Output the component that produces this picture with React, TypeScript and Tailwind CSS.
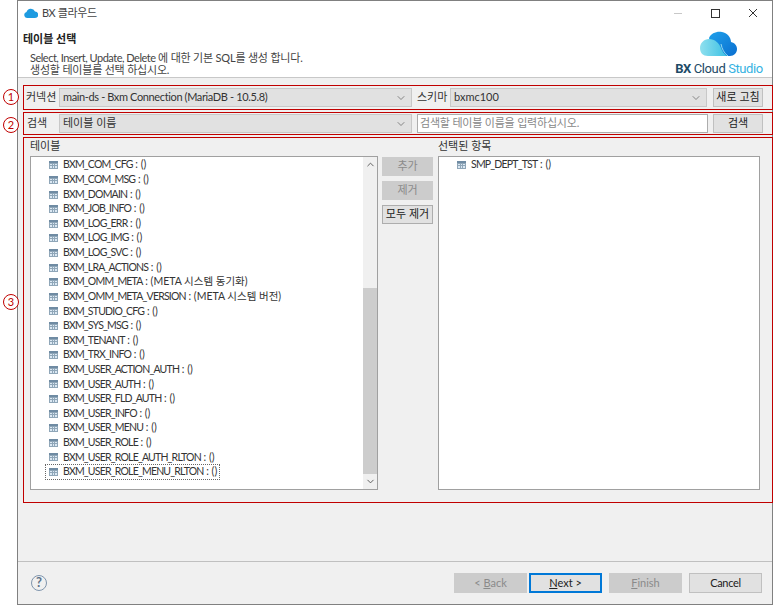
import { ChevronDown, ChevronUp } from 'lucide-react';

const font = "font-['Lato','Noto_Sans_CJK_KR',sans-serif]";

const tables = [
  ['BXM_COM_CFG', '()'],
  ['BXM_COM_MSG', '()'],
  ['BXM_DOMAIN', '()'],
  ['BXM_JOB_INFO', '()'],
  ['BXM_LOG_ERR', '()'],
  ['BXM_LOG_IMG', '()'],
  ['BXM_LOG_SVC', '()'],
  ['BXM_LRA_ACTIONS', '()'],
  ['BXM_OMM_META', '(META 시스템 동기화)'],
  ['BXM_OMM_META_VERSION', '(META 시스템 버전)'],
  ['BXM_STUDIO_CFG', '()'],
  ['BXM_SYS_MSG', '()'],
  ['BXM_TENANT', '()'],
  ['BXM_TRX_INFO', '()'],
  ['BXM_USER_ACTION_AUTH', '()'],
  ['BXM_USER_AUTH', '()'],
  ['BXM_USER_FLD_AUTH', '()'],
  ['BXM_USER_INFO', '()'],
  ['BXM_USER_MENU', '()'],
  ['BXM_USER_ROLE', '()'],
  ['BXM_USER_ROLE_AUTH_RLTON', '()'],
  ['BXM_USER_ROLE_MENU_RLTON', '()'],
];

function TableIcon() {
  return (
    <svg width="9" height="8" viewBox="0 0 9 8" className="shrink-0">
      <rect x="0" y="0" width="9" height="8" fill="#8fa6b8" />
      <rect x="0" y="0" width="9" height="2" fill="#6f8ba3" />
      <path d="M1 3h2v1H1zM4 3h1v1H4zM6 3h2v1H6zM1 5h2v2H1zM4 5h1v2H4zM6 5h2v2H6z" fill="#dbe8f3" />
    </svg>
  );
}

function Combo({ text, className, textClass = '' }: { text: string; className: string; textClass?: string }) {
  return (
    <div className={`flex items-center justify-between shrink-0 bg-[#e1e1e1] border border-[#c8c8c8] pl-[3px] pr-[4px] text-[11px] text-[#333] ${className}`}>
      <span className={textClass}>{text}</span>
      <ChevronDown className="w-[12px] h-[12px] text-[#666]" strokeWidth={1.5} />
    </div>
  );
}

function Btn({ label, className = '', disabled = false }: { label: React.ReactNode; className?: string; disabled?: boolean }) {
  return (
    <div
      className={`flex items-center justify-center shrink-0 border text-[11px] ${
        disabled ? 'bg-[#cccccc] border-[#cccccc] text-[#8a8a8a]' : 'bg-[#e1e1e1] border-[#c0c0c0] text-[#222]'
      } ${className}`}
    >
      {label}
    </div>
  );
}

function Row({ name, desc, focused = false }: { name: string; desc: string; focused?: boolean }) {
  return (
    <div className="h-[14.62px] flex items-center pl-[18px]">
      <div
        className={`flex items-center gap-[5px] h-[14px] whitespace-nowrap text-[10.5px] ${
          focused ? 'outline-1 outline-dotted outline-[#666] -ml-[3px] pl-[3px] pr-[2px]' : ''
        }`}
      >
        <TableIcon />
        <span>
          <span className="tracking-[-0.8px]">{name}</span> : {desc}
        </span>
      </div>
    </div>
  );
}

function Marker({ n, className }: { n: number; className: string }) {
  return (
    <div className={`absolute left-[3px] w-[16px] h-[16px] rounded-full border border-[#c00000] bg-white text-[#c00000] text-[11px] flex items-center justify-center ${className}`}>
      {n}
    </div>
  );
}

function CloudLogo() {
  return (
    <svg width="40" height="27" viewBox="0 0 40 27">
      <defs>
        <linearGradient id="back" x1="0" y1="0" x2="1" y2="1">
          <stop offset="0" stopColor="#1fa0ea" />
          <stop offset="1" stopColor="#0a6fd0" />
        </linearGradient>
        <linearGradient id="front" x1="0" y1="0" x2="1" y2="0">
          <stop offset="0" stopColor="#8fe0ee" />
          <stop offset="1" stopColor="#3cc0e4" />
        </linearGradient>
      </defs>
      <path d="M10 7C12 2 18 0 23 1c5 1 9 5 9 10 4 1 6 4 6 7 0 4-3 7-7 7H15Z" fill="url(#back)" />
      <path d="M1 17c0-5 4-9 9-9 6 0 10 4 12 9 1 3 3 6 6 8H9c-5 0-8-3-8-8Z" fill="url(#front)" />
      <path d="M22 13c1 5 3 9 7 12" fill="none" stroke="#b6eef2" strokeWidth="0.8" />
    </svg>
  );
}

export default function App() {
  return (
    <div className={`relative w-[776px] h-[605px] bg-white overflow-hidden ${font}`}>
      <div className="ml-[17px] w-[756px] h-[605px] border border-[#808080] bg-[#f0f0f0] flex flex-col text-[#333]">
        {/* title bar */}
        <div className="h-[24px] bg-white flex items-center pl-[6px] shrink-0">
          <svg width="14" height="10" viewBox="0 0 14 10">
            <path d="M3 10a3 3 0 0 1-.5-5.9A4.5 4.5 0 0 1 11 3.6 3.2 3.2 0 0 1 11 10Z" fill="#1e9be0" />
          </svg>
          <span className="ml-[4px] text-[11px] text-[#444] tracking-[-0.4px]">BX 클라우드</span>
          <div className="ml-auto flex items-center">
            <div className="w-[8px] h-[1px] bg-[#c8c8c8] mr-[29px]" />
            <div className="w-[9px] h-[9px] border border-[#333] mr-[28px]" />
            <svg width="10" height="10" viewBox="0 0 10 10" className="mr-[14px]">
              <path d="M1 1l8 8M9 1l-8 8" stroke="#333" strokeWidth="1" fill="none" />
            </svg>
          </div>
        </div>

        {/* wizard header */}
        <div className="h-[53px] bg-white border-b border-[#c8c8c8] flex justify-between shrink-0">
          <div className="pl-[5px] pt-[6px]">
            <div className="text-[11px] font-bold text-[#222] leading-[15px]">테이블 선택</div>
            <div className="mt-[6px] ml-[7px] text-[11px] leading-[12px] text-[#444] tracking-[-0.2px]">
              <div>
                <span className="tracking-[-0.5px]">Select, Insert, Update, Delete</span> 에 대한 기본 SQL를 생성 합니다.
              </div>
              <div>생성할 테이블를 선택 하십시오.</div>
            </div>
          </div>
          <div className="w-[88px] mr-[9px] flex flex-col items-center">
            <div className="mt-[6px] -ml-[1px]">
              <CloudLogo />
            </div>
            <div className="text-[13px] leading-[15px] font-['Roboto',sans-serif] tracking-[-0.4px] whitespace-nowrap mt-[3px]">
              <span className="font-bold text-[#1d4a66]">BX </span>
              <span className="text-[#1d4a66]">Cloud </span>
              <span className="text-[#35b2e2]">Studio</span>
            </div>
          </div>
        </div>

        {/* connection row */}
        <div className="mt-[7px] ml-[5px] w-[750px] h-[25px] border border-[#c00000] flex items-center text-[11px] shrink-0">
          <span className="w-[35px] pl-[2px] shrink-0 whitespace-nowrap">커넥션</span>
          <Combo text="main-ds - Bxm Connection (MariaDB - 10.5.8)" textClass="tracking-[-0.37px]" className="w-[353px] h-[19px]" />
          <span className="w-[38px] pl-[5px] shrink-0 whitespace-nowrap">스키마</span>
          <Combo text="bxmc100" className="w-[257px] h-[19px]" />
          <Btn label="새로 고침" className="ml-[6px] w-[50px] h-[19px]" />
        </div>

        {/* search row */}
        <div className="mt-[2px] ml-[5px] w-[750px] h-[23px] border border-[#c00000] flex items-center text-[11px] shrink-0">
          <span className="w-[35px] pl-[3px] shrink-0">검색</span>
          <Combo text="테이블 이름" className="w-[353px] h-[19px]" />
          <div className="ml-[5px] w-[291px] h-[19px] shrink-0 bg-white border border-[#adadad] flex items-center pl-[2px] text-[#888] tracking-[-0.2px]">
            검색할 테이블 이름을 입력하십시오.
          </div>
          <Btn label="검색" className="ml-[5px] w-[50px] h-[19px]" />
        </div>

        {/* table picker */}
        <div className="mt-[2px] ml-[5px] w-[750px] h-[366px] border border-[#c00000] flex text-[11px] shrink-0">
          <div className="ml-[6px] w-[348px] shrink-0">
            <div className="h-[18px] leading-[16px]">테이블</div>
            <div className="h-[334px] bg-white border border-[#a0a0a0] flex">
              <div className="flex-1 min-w-0 pt-[1px]">
                {tables.map(([name, desc], i) => (
                  <Row key={name} name={name} desc={desc} focused={i === tables.length - 1} />
                ))}
              </div>
              <div className="w-[14px] bg-[#f0f0f0] flex flex-col items-center">
                <ChevronUp className="h-[15px] w-[11px] text-[#555]" strokeWidth={2} />
                <div className="mt-[116px] w-full h-[186px] bg-[#cdcdcd]" />
                <ChevronDown className="mt-auto h-[15px] w-[11px] text-[#555]" strokeWidth={2} />
              </div>
            </div>
          </div>
          <div className="ml-[4px] w-[51px] pt-[19px] flex flex-col gap-[5px] shrink-0">
            <Btn label="추가" disabled className="h-[19px]" />
            <Btn label="제거" disabled className="h-[19px]" />
            <Btn label="모두 제거" className="h-[19px] !border-[#adadad]" />
          </div>
          <div className="ml-[5px] w-[322px] shrink-0">
            <div className="h-[18px] leading-[16px]">선택된 항목</div>
            <div className="h-[334px] bg-white border border-[#a0a0a0] pt-[1px]">
              <Row name="SMP_DEPT_TST" desc="()" />
            </div>
          </div>
        </div>

        <div className="flex-1" />

        {/* footer */}
        <div className="h-[43px] border-t border-[#c0c0c0] flex items-center pl-[13px] pr-[10px] text-[11px] shrink-0">
          <div className="w-[16px] h-[16px] rounded-full border-[1.5px] border-[#7f95ad] text-[#5f7389] text-[13px] font-bold flex items-center justify-center">
            ?
          </div>
          <Btn label={<span>&lt; <u>B</u>ack</span>} disabled className="ml-auto w-[73px] h-[20px]" />
          <Btn label={<span><u>N</u>ext &gt;</span>} className="ml-[2px] w-[73px] h-[20px] !border-2 !border-[#0078d7]" />
          <Btn label={<span><u>F</u>inish</span>} disabled className="ml-[7px] w-[73px] h-[20px]" />
          <Btn label={<span className="tracking-[-0.3px]">Cancel</span>} className="ml-[7px] w-[73px] h-[20px]" />
        </div>
      </div>

      {/* annotation markers */}
      <Marker n={1} className="top-[89px]" />
      <Marker n={2} className="top-[117px]" />
      <Marker n={3} className="top-[294px]" />
    </div>
  );
}
